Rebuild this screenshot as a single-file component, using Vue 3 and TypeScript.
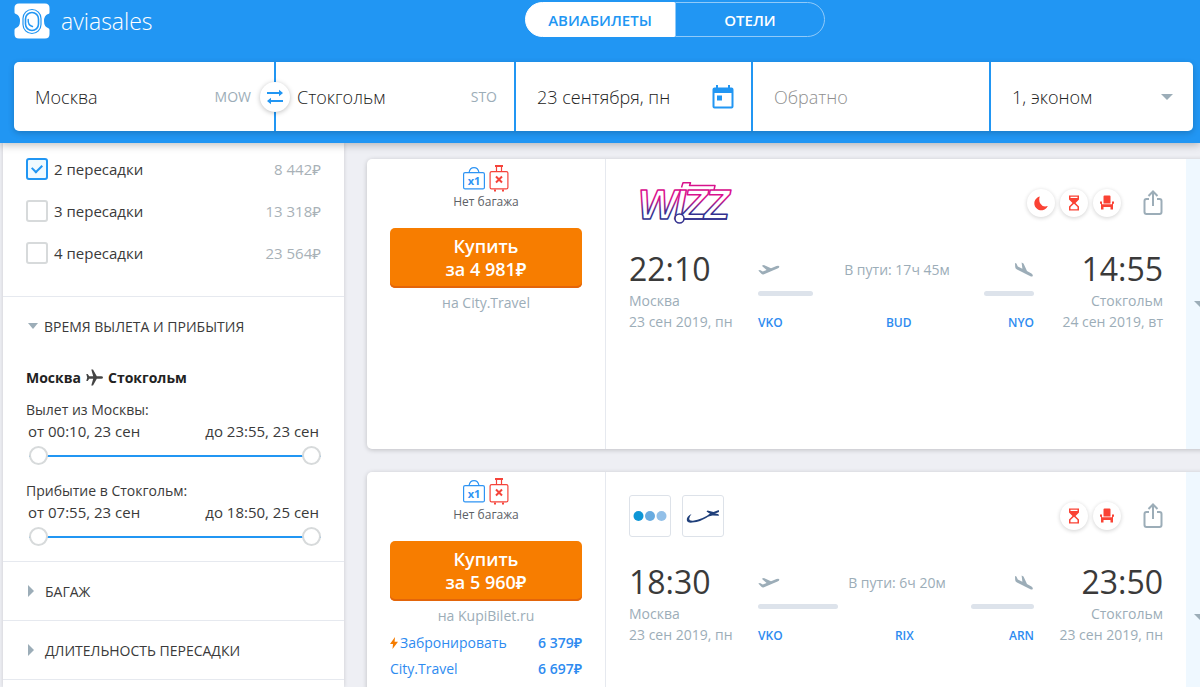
<script setup lang="ts">
import { reactive, ref } from 'vue'

interface Stop { id: string; label: string; price: string; checked: boolean }
interface Range { id: string; label: string; from: string; to: string; low: number; high: number }
interface Offer { agent: string; price: string; instant: boolean }
interface Endpoint { time: string; city: string; date: string; code: string }
interface Ticket {
  id: number
  price: string
  agent: string
  offers: Offer[]
  carriers: string[]
  badges: string[]
  duration: string
  departure: Endpoint
  arrival: Endpoint
  via: string
  firstLeg: number
  lastLeg: number
}

const origin = ref('Москва')
const destination = ref('Стокгольм')
const departDate = ref('23 сентября, пн')
const returnDate = ref('')
const timesOpen = ref(true)

const stops = reactive<Stop[]>([
  { id: 'stops-2', label: '2 пересадки', price: '8\u00a0442₽', checked: true },
  { id: 'stops-3', label: '3 пересадки', price: '13\u00a0318₽', checked: false },
  { id: 'stops-4', label: '4 пересадки', price: '23\u00a0564₽', checked: false },
])

const ranges = reactive<Range[]>([
  { id: 'dep', label: 'Вылет из Москвы:', from: 'от 00:10, 23 сен', to: 'до 23:55, 23 сен', low: 0, high: 100 },
  { id: 'arr', label: 'Прибытие в Стокгольм:', from: 'от 07:55, 23 сен', to: 'до 18:50, 25 сен', low: 0, high: 100 },
])

const closedSections = ['БАГАЖ', 'ДЛИТЕЛЬНОСТЬ ПЕРЕСАДКИ']

const tickets: Ticket[] = [
  {
    id: 1,
    price: '4\u00a0981₽',
    agent: 'City.Travel',
    offers: [],
    carriers: ['wizz'],
    badges: ['night', 'wait', 'seat'],
    duration: '17ч 45м',
    departure: { time: '22:10', city: 'Москва', date: '23 сен 2019, пн', code: 'VKO' },
    arrival: { time: '14:55', city: 'Стокгольм', date: '24 сен 2019, вт', code: 'NYO' },
    via: 'BUD',
    firstLeg: 20,
    lastLeg: 18,
  },
  {
    id: 2,
    price: '5\u00a0960₽',
    agent: 'KupiBilet.ru',
    offers: [
      { agent: 'Забронировать', price: '6\u00a0379₽', instant: true },
      { agent: 'City.Travel', price: '6\u00a0697₽', instant: false },
    ],
    carriers: ['dots', 'swoosh'],
    badges: ['wait', 'seat'],
    duration: '6ч 20м',
    departure: { time: '18:30', city: 'Москва', date: '23 сен 2019, пн', code: 'VKO' },
    arrival: { time: '23:50', city: 'Стокгольм', date: '23 сен 2019, пн', code: 'ARN' },
    via: 'RIX',
    firstLeg: 29,
    lastLeg: 23,
  },
]

const badgeNames: Record<string, string> = {
  night: 'Ночная пересадка',
  wait: 'Долгая пересадка',
  seat: 'Кресло',
}

function swapCities() {
  const previous = origin.value
  origin.value = destination.value
  destination.value = previous
}
</script>

<template>
  <div class="page">
    <header class="header">
      <div class="topbar">
        <a class="brand" href="#">
          <svg class="brand-mark" viewBox="0 0 36 36" aria-hidden="true">
            <path fill="#fff" d="M5 0.500H31Q35.500 0.500 35.500 5V9.500Q35.500 11 34 11Q30 12.500 30 18T34 25Q35.500 25.500 35.500 27V31Q35.500 35.500 31 35.500H5Q0.500 35.500 0.500 31V27Q0.500 25.500 2 25Q6 23.500 6 18T2 11Q0.500 10.500 0.500 9.500V5Q0.500 0.500 5 0.500Z" />
            <rect x="9" y="6.500" width="18" height="24" rx="9" fill="none" stroke="#2196f3" stroke-width="1.200" />
            <rect x="11.500" y="9.500" width="13" height="18" rx="6.500" fill="none" stroke="#2196f3" stroke-width="1.600" />
            <path d="M14.200 16.500Q13.800 22.500 18.500 23.500" fill="none" stroke="#2196f3" stroke-width="1.400" stroke-linecap="round" />
          </svg>
          <span>aviasales</span>
        </a>
        <nav class="tabs">
          <a class="tab active" href="#">АВИАБИЛЕТЫ</a>
          <a class="tab" href="#">ОТЕЛИ</a>
        </nav>
      </div>

      <form class="search" @submit.prevent>
        <label class="field">
          <input v-model="origin" type="text" aria-label="Город вылета" />
          <span class="iata">MOW</span>
          <button class="swap" type="button" aria-label="Поменять города местами" @click="swapCities">
            <svg viewBox="0 0 18 16" aria-hidden="true">
              <path d="M1 4H14M4 12H17" stroke="#2196f3" stroke-width="2" />
              <path d="M13 0.800L17 4L13 7.200ZM5 8.800L1 12L5 15.200Z" fill="#2196f3" />
            </svg>
          </button>
        </label>
        <label class="field">
          <input v-model="destination" type="text" aria-label="Город прибытия" />
          <span class="iata">STO</span>
        </label>
        <label class="field">
          <input v-model="departDate" type="text" aria-label="Дата вылета" />
          <svg class="calendar" viewBox="0 0 22 24" aria-hidden="true">
            <path fill="#2196f3" fill-rule="evenodd" d="M4 0H6V2.500H16V0H18V2.500H19.500Q21.500 2.500 21.500 4.500V21.500Q21.500 23.500 19.500 23.500H2.500Q0.500 23.500 0.500 21.500V4.500Q0.500 2.500 2.500 2.500H4ZM2.500 8V21.500H19.500V8ZM5 10.500H10V15.500H5Z" />
          </svg>
        </label>
        <label class="field">
          <input v-model="returnDate" type="text" placeholder="Обратно" aria-label="Дата обратного вылета" />
        </label>
        <label class="field">
          <select aria-label="Пассажиры и класс">
            <option>1, эконом</option>
            <option>1, бизнес</option>
          </select>
          <i class="caret down wide"></i>
        </label>
      </form>
    </header>

    <main class="content">
      <aside class="filters">
        <section class="block stops">
          <div v-for="stop in stops" :key="stop.id" class="stop">
            <input :id="stop.id" v-model="stop.checked" type="checkbox" />
            <label :for="stop.id">{{ stop.label }}</label>
            <span class="stop-price">{{ stop.price }}</span>
          </div>
        </section>

        <section class="block">
          <button class="block-title" type="button" :aria-expanded="timesOpen" @click="timesOpen = !timesOpen">
            <i class="caret" :class="timesOpen ? 'down' : 'right'"></i>ВРЕМЯ ВЫЛЕТА И ПРИБЫТИЯ
          </button>
          <div v-if="timesOpen" class="times">
            <h3 class="direction">
              Москва
              <svg viewBox="0 0 17 17" aria-hidden="true">
                <path fill="#444" d="M17 8.500Q17 9.800 15.200 9.800H10.800L7 16.500H5.300L7.200 9.800H3.200L1.700 12H0.300L1.200 8.500L0.300 5H1.700L3.200 7.200H7.200L5.300 0.500H7L10.800 7.200H15.200Q17 7.200 17 8.500Z" />
              </svg>
              Стокгольм
            </h3>
            <div v-for="range in ranges" :key="range.id" class="range">
              <p class="range-label">{{ range.label }}</p>
              <div class="range-values">
                <label :for="range.id + '-low'">{{ range.from }}</label>
                <label :for="range.id + '-high'">{{ range.to }}</label>
              </div>
              <div class="slider">
                <input :id="range.id + '-low'" v-model.number="range.low" type="range" min="0" max="100" />
                <input :id="range.id + '-high'" v-model.number="range.high" type="range" min="0" max="100" />
              </div>
            </div>
          </div>
        </section>

        <section v-for="title in closedSections" :key="title" class="block">
          <button class="block-title" type="button" aria-expanded="false">
            <i class="caret right"></i>{{ title }}
          </button>
        </section>
      </aside>

      <div class="results">
        <article v-for="ticket in tickets" :key="ticket.id" class="ticket">
          <div class="buy">
            <div class="bags">
              <svg class="handbag" viewBox="0 0 22 27" aria-hidden="true">
                <rect x="0.600" y="7.600" width="20.800" height="16.300" rx="1.500" fill="none" stroke="#2e94f4" stroke-width="1.200" />
                <path d="M6 7.500Q7 2.600 11 2.600T16 7.500" fill="none" stroke="#2e94f4" stroke-width="1.200" />
                <text x="11" y="19.500" text-anchor="middle" class="bag-count">x1</text>
              </svg>
              <svg class="suitcase" viewBox="0 0 20 27" aria-hidden="true">
                <rect x="1.100" y="6.600" width="17.800" height="17.300" rx="1.500" fill="none" stroke="#f5433a" stroke-width="1.200" />
                <path d="M7.500 6.500V1.500M12.500 6.500V1.500" stroke="#f5433a" stroke-width="1.200" />
                <path d="M6 0H14V2H6ZM5 24.500H7V26.500H5ZM13 24.500H15V26.500H13Z" fill="#f5433a" />
                <path d="M7 11.500L13 17.500M13 11.500L7 17.500" stroke="#f5433a" stroke-width="2" />
              </svg>
            </div>
            <p class="bag-note">Нет багажа</p>
            <button class="buy-button" type="button">Купить<br />за {{ ticket.price }}</button>
            <p class="agent">на {{ ticket.agent }}</p>
            <ul v-if="ticket.offers.length" class="offers">
              <li v-for="offer in ticket.offers" :key="offer.agent">
                <a href="#">
                  <svg v-if="offer.instant" class="bolt" viewBox="0 0 8 12" aria-hidden="true">
                    <path fill="#f57c00" d="M5 0L0 7H3L2.500 12L8 4.800H4.600Z" />
                  </svg>
                  <span>{{ offer.agent }}</span>
                  <b>{{ offer.price }}</b>
                </a>
              </li>
            </ul>
          </div>

          <div class="flight">
            <div class="flight-top">
              <div class="carriers">
                <template v-for="carrier in ticket.carriers" :key="carrier">
                  <svg v-if="carrier === 'wizz'" class="wizz" viewBox="0 0 106 42" role="img" aria-label="Wizz">
                    <defs>
                      <linearGradient id="wizz-ink" gradientUnits="userSpaceOnUse" x1="0" y1="17" x2="0" y2="31">
                        <stop offset="0" stop-color="#d8128c" />
                        <stop offset="1" stop-color="#33308f" />
                      </linearGradient>
                    </defs>
                    <g fill="#fff" stroke="url(#wizz-ink)" stroke-width="1.500" stroke-linejoin="round">
                      <text x="9 45 53 75" y="37" class="wizz-text">WIZZ</text>
                      <path d="M52.500 5.500L54 0.800H61.500L60.500 3.500H86L85 8M55 37H98" fill="none" />
                      <circle cx="50.500" cy="36.500" r="4.500" />
                    </g>
                  </svg>
                  <span v-else class="carrier-box">
                    <svg v-if="carrier === 'dots'" viewBox="0 0 40 40" aria-hidden="true">
                      <circle cx="8.500" cy="20" r="5" fill="#0d96d6" />
                      <circle cx="20" cy="20" r="5" fill="#68abe0" />
                      <circle cx="31.500" cy="20" r="5" fill="#93c0e8" />
                    </svg>
                    <svg v-else viewBox="0 0 40 40" aria-hidden="true">
                      <path fill="#1f3f7a" d="M8.500 18Q3.500 20.500 3.800 24Q4.200 27 9 26.600Q18 26 27 19.500L36 16L35.800 14L30.500 16L24.500 14.500L23.500 15.600L27 17.700Q19 23.500 10 24.700Q6.200 25 6.200 22.500Q6.400 20.500 8.500 18Z" />
                      <path fill="#1f3f7a" d="M29 16.500L35.500 18.200L36 19.800L29.500 19.500L25.500 20.500L25 19.200Z" />
                    </svg>
                  </span>
                </template>
              </div>
              <div class="badges">
                <span v-for="badge in ticket.badges" :key="badge" class="badge" role="img" :aria-label="badgeNames[badge]">
                  <svg viewBox="0 0 16 16" aria-hidden="true">
                    <path v-if="badge === 'night'" fill="#fa4234" d="M6.800 1.500A7 7 0 1 0 14.800 11Q9.500 12.500 7.300 8.500Q5.500 5 6.800 1.500Z" />
                    <path v-else-if="badge === 'wait'" fill="#fa4234" fill-rule="evenodd" d="M3 0.500H13V4.500L9.500 8L13 11.500V15.500H3V11.500L6.500 8L3 4.500ZM4.500 1.700V3H11.500V1.700ZM8 8.800L4.500 12V14.200H11.500V12Z" />
                    <path v-else fill="#fa4234" d="M5.500 0.500H10.500Q11.500 0.500 11.500 1.500V8.500H4.500V1.500Q4.500 0.500 5.500 0.500ZM1 6.500H3V9.300H13V6.500H15V8.700H14V14.500H11.500V12H4.500V14.500H2V8.700H1Z" />
                  </svg>
                </span>
              </div>
              <button class="share" type="button" aria-label="Поделиться">
                <svg viewBox="0 0 20 26" aria-hidden="true">
                  <g fill="none" stroke="#9cadb8" stroke-width="2">
                    <path d="M6 9H3.500Q1.500 9 1.500 11V22Q1.500 24 3.500 24H16.500Q18.500 24 18.500 22V11Q18.500 9 16.500 9H14" />
                    <path d="M10 16V2M5.500 6L10 1.500L14.500 6" />
                  </g>
                </svg>
              </button>
            </div>

            <div class="itinerary">
              <div class="endpoint">
                <strong>{{ ticket.departure.time }}</strong>
                <span>{{ ticket.departure.city }}</span>
                <span>{{ ticket.departure.date }}</span>
              </div>
              <div class="route">
                <div class="route-head">
                  <svg class="takeoff" viewBox="0 0 22 12" aria-hidden="true">
                    <path fill="#9cadb8" d="M0.300 6.500L2 6L4.800 7.400L8.600 6L3.800 1.700L5.800 1L13 4.300L18.500 2Q21 1.300 21.300 2.500Q21.500 3.500 19.500 4.400L6 10.200Q4.500 10.800 3.400 9.800Z" />
                  </svg>
                  <span>В пути: {{ ticket.duration }}</span>
                  <svg class="landing" viewBox="0 0 20 16" aria-hidden="true">
                    <path fill="#9cadb8" d="M1 1L2.400 1.600L3.800 4.600L8.400 6.800L7.600 0.500L9.500 1.400L13 9L17.500 11.400Q19.200 12.700 18.700 14Q18 15 16 14L3 7.600Q1.300 6.700 1.200 5Z" />
                  </svg>
                </div>
                <div class="legs" :style="{ gridTemplateColumns: `${ticket.firstLeg}% 1fr ${ticket.lastLeg}%` }">
                  <i class="leg"></i><i></i><i class="leg"></i>
                  <span>{{ ticket.departure.code }}</span>
                  <span class="via">{{ ticket.via }}</span>
                  <span class="last">{{ ticket.arrival.code }}</span>
                </div>
              </div>
              <div class="endpoint right">
                <strong>{{ ticket.arrival.time }}</strong>
                <span>{{ ticket.arrival.city }}</span>
                <span>{{ ticket.arrival.date }}</span>
              </div>
            </div>
          </div>

          <button class="expand" type="button" aria-label="Подробнее"><i class="caret down wide"></i></button>
        </article>
      </div>
    </main>
  </div>
</template>

<style>
body {
  margin: 0;
  background: #eeeff4;
}
</style>

<style scoped>
* {
  box-sizing: border-box;
}

.page {
  display: flex;
  flex-direction: column;
  height: 100vh;
  overflow: hidden;
  font-family: "Open Sans", "Noto Sans", sans-serif;
  font-size: 14px;
  color: #3a3a3a;
}

button,
input,
select {
  font: inherit;
  color: inherit;
  border: 0;
  padding: 0;
  margin: 0;
  background: none;
}

button {
  cursor: pointer;
}

a {
  color: inherit;
  text-decoration: none;
}

p,
h3,
ul {
  margin: 0;
  padding: 0;
  list-style: none;
}

svg {
  display: block;
  flex: none;
}

.header {
  position: relative;
  z-index: 2;
  flex: none;
  padding: 2px 7px 12px 14px;
  background: #2196f3;
  box-shadow: 0 2px 8px rgba(0, 0, 0, 0.25);
}

.topbar {
  display: flex;
  height: 38px;
  margin-bottom: 22px;
}

.brand {
  display: flex;
  flex: 0 0 511px;
  align-items: center;
  gap: 11px;
  font-size: 23px;
  font-weight: 300;
  color: #fff;
}

.brand-mark {
  width: 36px;
  height: 36px;
}

.tabs {
  display: flex;
  height: 35px;
}

.tab {
  width: 150px;
  border: 1px solid #90caf9;
  border-radius: 0 18px 18px 0;
  text-align: center;
  font-size: 15px;
  font-weight: 600;
  line-height: 34px;
  color: #fff;
}

.tab.active {
  border-color: #fff;
  border-radius: 18px 0 0 18px;
  background: #fff;
  color: #2196f3;
}

.search {
  display: grid;
  grid-template-columns:
    minmax(0, 260fr) minmax(0, 238fr) minmax(0, 235fr)
    minmax(0, 236fr) minmax(0, 202fr);
  gap: 2px;
  border-radius: 5px;
  box-shadow: 0 2px 6px rgba(0, 0, 0, 0.2);
}

.field {
  position: relative;
  display: flex;
  align-items: center;
  height: 69px;
  padding: 0 17px 0 21px;
  background: #fff;
  font-size: 18px;
  font-weight: 300;
  color: #222;
}

.field:first-child {
  padding-right: 23px;
  border-radius: 5px 0 0 5px;
}

.field:last-child {
  padding-right: 20px;
  border-radius: 0 5px 5px 0;
}

.field input,
.field select {
  flex: 1;
  width: 100%;
  min-width: 0;
  outline: 0;
  appearance: none;
}

.field input::placeholder {
  color: #8f8f8f;
  opacity: 1;
}

.iata {
  font-size: 14px;
  font-weight: 400;
  color: #9cadb8;
}

.swap {
  position: absolute;
  z-index: 1;
  top: 50%;
  right: -16px;
  display: flex;
  align-items: center;
  justify-content: center;
  width: 30px;
  height: 30px;
  border-radius: 50%;
  background: #fff;
  box-shadow: 0 1px 5px rgba(0, 0, 0, 0.25);
  transform: translateY(-50%);
}

.swap svg {
  width: 18px;
  height: 16px;
}

.calendar {
  width: 22px;
  height: 24px;
}

.caret {
  flex: none;
  width: 0;
  height: 0;
  border: 5px solid transparent;
}

.caret.down {
  border-width: 6px 5px 0;
  border-top-color: #9cadb8;
}

.caret.down.wide {
  border-width: 6px 6px 0;
}

.caret.right {
  border-width: 6px 0 6px 6px;
  border-left-color: #9cadb8;
  margin-right: 5px;
}

.content {
  display: flex;
  flex: 1;
  gap: 23px;
  min-height: 0;
  padding-left: 3px;
  background: #eeeff4;
}

.filters {
  flex: 0 0 341px;
  background: #fff;
  box-shadow: 0 0 4px rgba(0, 0, 0, 0.15);
}

.block {
  border-bottom: 1px solid #e6e9ef;
}

.stops {
  padding: 5px 23px 22px;
}

.stop {
  display: flex;
  align-items: center;
  gap: 6px;
  height: 42px;
  font-size: 15px;
}

.stop input {
  display: grid;
  place-items: center;
  width: 22px;
  height: 22px;
  border: 2px solid #d7dadb;
  border-radius: 3px;
  background: #fff;
  appearance: none;
}

.stop input:checked {
  border-color: #2196f3;
  background: #f0faff;
}

.stop input:checked::after {
  content: "";
  width: 8px;
  height: 5px;
  margin-bottom: 3px;
  border: solid #2196f3;
  border-width: 0 0 2px 2px;
  transform: rotate(-45deg);
}

.stop label {
  flex: 1;
}

.stop-price {
  color: #a8b1b7;
}

.block-title {
  display: flex;
  align-items: center;
  gap: 6px;
  width: 100%;
  height: 58px;
  padding-left: 25px;
  font-size: 14px;
  font-weight: 500;
}

.times {
  padding: 10px 23px 11px;
}

.direction {
  display: flex;
  align-items: center;
  gap: 5px;
  height: 24px;
  margin-bottom: 11px;
  font-size: 14px;
  font-weight: 700;
  color: #222;
}

.direction svg {
  width: 17px;
  height: 17px;
}

.range + .range {
  margin-top: 12px;
}

.range-label {
  line-height: 20px;
}

.range-values {
  display: flex;
  justify-content: space-between;
  padding: 0 2px;
  font-size: 15px;
  line-height: 22px;
}

.slider {
  display: grid;
  align-items: center;
  height: 27px;
  margin-left: 3px;
  background: linear-gradient(#2196f3, #2196f3) center / 100% 2px no-repeat;
}

.slider input {
  grid-area: 1 / 1;
  width: 100%;
  height: 19px;
  appearance: none;
  pointer-events: none;
}

.slider input::-webkit-slider-thumb {
  width: 19px;
  height: 19px;
  border: 2px solid #d7dadb;
  border-radius: 50%;
  background: #fff;
  appearance: none;
  pointer-events: auto;
}

.results {
  display: flex;
  flex: 1;
  flex-direction: column;
  gap: 23px;
  min-width: 0;
  margin-right: -14px;
  padding-top: 16px;
}

.ticket {
  display: flex;
  flex: none;
  min-height: 290px;
  overflow: hidden;
  border-radius: 5px;
  background: #fff;
  box-shadow: 0 1px 5px rgba(0, 0, 0, 0.2);
}

.buy {
  flex: 0 0 239px;
  padding: 6px 23px 0;
  border-right: 1px solid #e6e9ef;
  text-align: center;
}

.bags {
  display: flex;
  justify-content: center;
  gap: 4px;
}

.handbag {
  width: 22px;
  height: 27px;
}

.suitcase {
  width: 20px;
  height: 27px;
}

.bag-count {
  fill: #2e94f4;
  font-size: 11px;
  font-weight: 700;
}

.bag-note {
  font-size: 12px;
  line-height: 20px;
  color: #5c6166;
}

.buy-button {
  width: 100%;
  height: 60px;
  margin: 16px 0 4px;
  border-radius: 5px;
  background: #f77d00;
  box-shadow: inset 0 -2px 0 #e3650a;
  font-size: 18px;
  font-weight: 600;
  line-height: 23px;
  color: #fff;
}

.agent {
  line-height: 22px;
  color: #9cadb8;
}

.offers {
  margin-top: 3px;
}

.offers a {
  display: flex;
  align-items: center;
  gap: 2px;
  line-height: 26px;
  color: #2e8bf0;
}

.offers b {
  margin-left: auto;
  font-weight: 600;
}

.bolt {
  width: 8px;
  height: 12px;
}

.flight {
  flex: 1;
  min-width: 0;
  padding: 23px 23px 0;
}

.flight-top {
  display: flex;
  align-items: center;
  height: 42px;
  margin-bottom: 24px;
}

.carriers {
  display: flex;
  flex: 1;
  gap: 11px;
}

.wizz {
  width: 106px;
  height: 42px;
  overflow: visible;
}

.wizz-text {
  font-family: "Liberation Sans", Arial, sans-serif;
  font-size: 42px;
  font-style: italic;
  font-weight: 700;
}

.carrier-box {
  width: 42px;
  height: 42px;
  border: 1px solid #dde2e9;
  border-radius: 3px;
}

.carrier-box svg {
  width: 40px;
  height: 40px;
}

.badges {
  display: flex;
  gap: 5px;
}

.badge {
  display: grid;
  place-items: center;
  width: 28px;
  height: 28px;
  border-radius: 50%;
  background: #fff;
  box-shadow: 0 1px 4px rgba(0, 0, 0, 0.18);
}

.badge svg {
  width: 16px;
  height: 16px;
}

.share {
  margin-left: 22px;
}

.share svg {
  width: 20px;
  height: 26px;
}

.itinerary {
  display: grid;
  grid-template-columns: 129px 1fr 129px;
  color: #9cadb8;
}

.endpoint {
  display: flex;
  flex-direction: column;
  line-height: 21px;
}

.endpoint.right {
  text-align: right;
}

.endpoint strong {
  font-size: 32px;
  font-weight: 400;
  line-height: 42px;
  color: #3a3a3a;
}

.route-head {
  display: flex;
  align-items: center;
  justify-content: space-between;
  height: 43px;
}

.takeoff {
  width: 22px;
  height: 12px;
}

.landing {
  width: 20px;
  height: 16px;
}

.legs {
  display: grid;
  row-gap: 16px;
  font-size: 12px;
  font-weight: 600;
  line-height: 22px;
  color: #2e8bf0;
}

.leg {
  height: 5px;
  border-radius: 3px;
  background: #dde3eb;
}

.via {
  text-align: center;
}

.last {
  text-align: right;
}

.expand {
  display: flex;
  flex: 0 0 28px;
  justify-content: center;
  align-items: center;
  background: #eff8ff;
}
</style>
